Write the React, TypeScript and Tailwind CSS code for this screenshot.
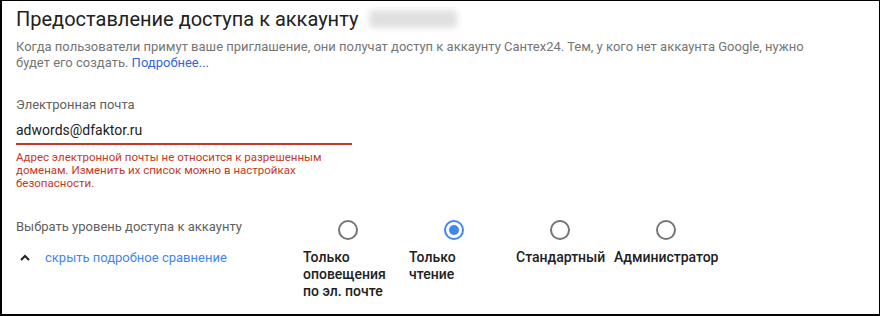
import React from "react";

const options = [
  { label: ["Только", "оповещения", "по эл. почте"], checked: false, pad: "pl-2" },
  { label: ["Только", "чтение"], checked: true, pad: "pl-2" },
  { label: ["Стандартный"], checked: false, pad: "pl-[9px]" },
  { label: ["Администратор"], checked: false, pad: "pl-[1px]" },
];

function Radio({ checked }: { checked: boolean }) {
  return (
    <div
      className={
        "w-[20px] h-[20px] rounded-full border-2 flex items-center justify-center " +
        (checked ? "border-[#4285f4]" : "border-[#757575]")
      }
    >
      {checked && <div className="w-[10px] h-[10px] rounded-full bg-[#4285f4]" />}
    </div>
  );
}

export default function App() {
  return (
    <div
      className="w-[880px] h-[316px] bg-white border-t border-r border-l-2 border-b-2 border-black overflow-hidden"
      style={{ fontFamily: "Roboto, 'Noto Sans', sans-serif" }}
    >
      <div className="pl-[14px] pr-4">
        <div className="flex items-center pt-[3px] h-[32px]">
          <h1 className="text-[20px] leading-[28px] text-[#212121] font-normal">
            Предоставление доступа к аккаунту
          </h1>
          <div className="ml-[11px] w-[88px] h-[18px] bg-[#e0e0e0] blur-[3px] rounded" />
        </div>
        <p className="mt-[6px] text-[13px] leading-[16px] text-[#757575]">
          Когда пользователи примут ваше приглашение, они получат доступ к аккаунту Сантех24. Тем, у кого нет аккаунта Google, нужно
          <br />
          будет его создать. <span className="text-[#3367d6]">Подробнее...</span>
        </p>

        <div className="mt-[26px] text-[13px] leading-[16px] text-[#616161]">Электронная почта</div>
        <div className="mt-[8px] w-[336px] border-b-2 border-[#c53929] pb-[4px] text-[14px] leading-[18px] text-[#212121]">
          adwords@dfaktor.ru
        </div>
        <div className="mt-[6px] w-[336px] text-[11.5px] leading-[13px] text-[#c53929]">
          Адрес электронной почты не относится к разрешенным доменам. Изменить их список можно в настройках безопасности.
        </div>

        <div className="mt-[30px] flex">
          <div className="w-[279px] shrink-0">
            <div className="text-[13px] leading-[14px] text-[#616161]">
              Выбрать уровень доступа к аккаунту
            </div>
            <div className="mt-[16px] flex items-center text-[13px] leading-[16px] text-[#4285f4]">
              <svg width="10" height="8" viewBox="0 0 10 8" className="ml-[4px] mr-[15px]">
                <path d="M1 6 L5 2 L9 6" fill="none" stroke="#212121" strokeWidth="2" />
              </svg>
              скрыть подробное сравнение
            </div>
          </div>
          <div className="grid grid-cols-[106px_106px_106px_106px]">
            {options.map((o, i) => (
              <div key={i} className="flex flex-col">
                <div className="flex justify-center">
                  <Radio checked={o.checked} />
                </div>
                <div className={"mt-[9px] text-[14px] leading-[17px] font-medium text-[#212121] whitespace-nowrap " + o.pad}>
                  {o.label.map((l, j) => (
                    <div key={j}>{l}</div>
                  ))}
                </div>
              </div>
            ))}
          </div>
        </div>
      </div>
    </div>
  );
}
